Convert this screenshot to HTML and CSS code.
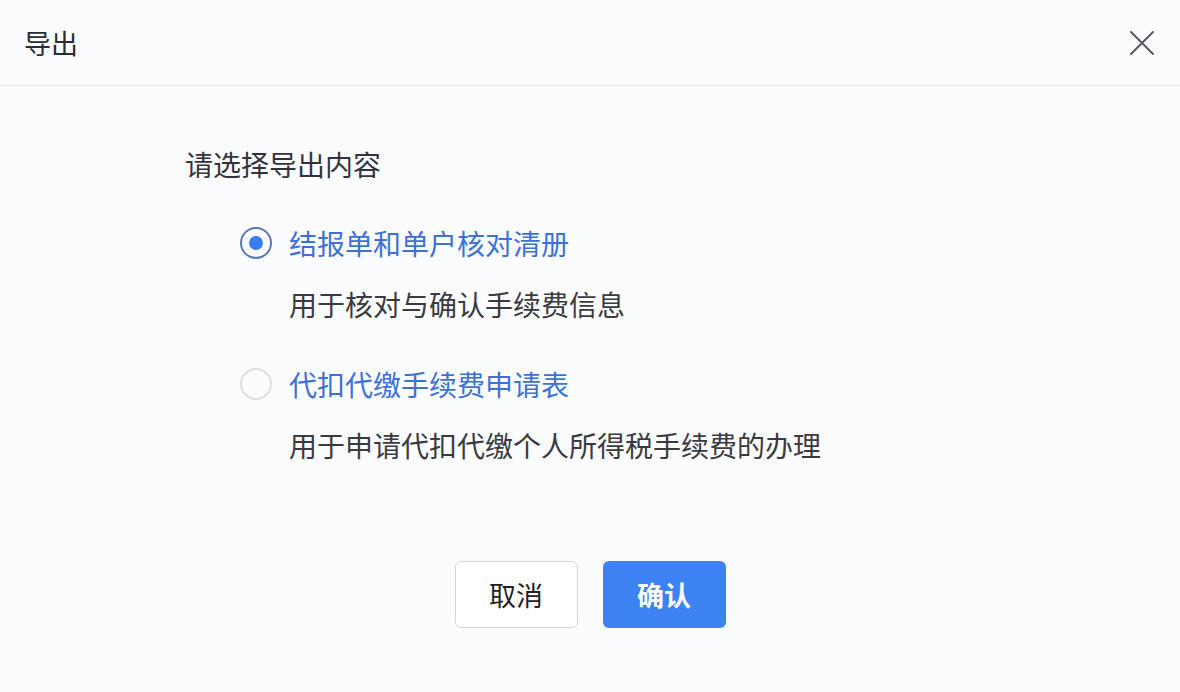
FILE: index.html
```html
<!DOCTYPE html>
<html lang="zh-CN">
<head>
    <meta charset="UTF-8">
    <meta name="viewport" content="width=device-width, initial-scale=1.0">
    <title>导出</title>
    <link rel="stylesheet" href="styles.css">
</head>
<body>
    <div class="dialog">
        <div class="dialog-header">
            <span class="dialog-title">导出</span>
            <button class="close" aria-label="关闭">
                <svg width="26" height="26" viewBox="0 0 26 26">
                    <path d="M2 2 L24 24 M24 2 L2 24" stroke="#555a66" stroke-width="2" fill="none" stroke-linecap="round"/>
                </svg>
            </button>
        </div>
        <div class="dialog-body">
            <p class="question">请选择导出内容</p>
            <ul class="options">
                <li>
                    <label class="option">
                        <input type="radio" name="export" checked>
                        <span class="radio"></span>
                        <span class="option-label">结报单和单户核对清册</span>
                    </label>
                    <p class="desc">用于核对与确认手续费信息</p>
                </li>
                <li>
                    <label class="option">
                        <input type="radio" name="export">
                        <span class="radio"></span>
                        <span class="option-label">代扣代缴手续费申请表</span>
                    </label>
                    <p class="desc">用于申请代扣代缴个人所得税手续费的办理</p>
                </li>
            </ul>
        </div>
        <div class="dialog-footer">
            <button class="btn btn-cancel">取消</button>
            <button class="btn btn-primary">确认</button>
        </div>
    </div>
</body>
</html>
```

FILE: styles.css
```css
body {
    margin: 0;
    padding: 0;
    background-color: #fbfcfe;
    font-family: "Noto Sans CJK SC", "Noto Sans", sans-serif;
    color: #333;
}

.dialog {
    width: 1180px;
    height: 692px;
    background-color: #fbfcfe;
}

.dialog-header {
    height: 86px;
    box-sizing: border-box;
    border-bottom: 1px solid #e4e7ee;
    display: flex;
    align-items: center;
    justify-content: space-between;
    padding: 0 24px 0 24px;
}

.dialog-title {
    font-size: 27px;
    color: #2b2b33;
}

.close {
    background: none;
    border: none;
    padding: 0;
    margin-right: 1px;
    width: 26px;
    height: 26px;
    cursor: pointer;
}

.dialog-body {
    padding: 58px 0 0 185px;
}

.question {
    margin: 0;
    font-size: 28px;
    line-height: 40px;
    color: #33333d;
}

.options {
    list-style: none;
    margin: 39px 0 0 55px;
    padding: 0;
}

.options li + li {
    margin-top: 40px;
}

.option {
    display: flex;
    align-items: center;
    height: 40px;
    cursor: pointer;
}

.option input {
    display: none;
}

.radio {
    width: 32px;
    height: 32px;
    box-sizing: border-box;
    border: 2px solid #dcdee3;
    border-radius: 50%;
    display: flex;
    align-items: center;
    justify-content: center;
    margin-right: 17px;
}

.option input:checked + .radio {
    border-color: #5a78b0;
}

.option input:checked + .radio::after {
    content: "";
    width: 14px;
    height: 14px;
    border-radius: 50%;
    background-color: #3a7cf0;
}

.option-label {
    font-size: 28px;
    color: #3d71d6;
}

.desc {
    margin: 21px 0 0 49px;
    font-size: 28px;
    line-height: 40px;
    color: #3a3a40;
}

.dialog-footer {
    display: flex;
    justify-content: center;
    gap: 25px;
    margin-top: 96px;
}

.btn {
    width: 123px;
    height: 67px;
    box-sizing: border-box;
    border-radius: 6px;
    font-family: "Noto Sans CJK SC", sans-serif;
    font-size: 27px;
    cursor: pointer;
}

.btn-cancel {
    background-color: #fff;
    border: 1px solid #d4d6dc;
    color: #222;
}

.btn-primary {
    background-color: #3c82f2;
    border: none;
    color: #fff;
    font-weight: bold;
}
```
